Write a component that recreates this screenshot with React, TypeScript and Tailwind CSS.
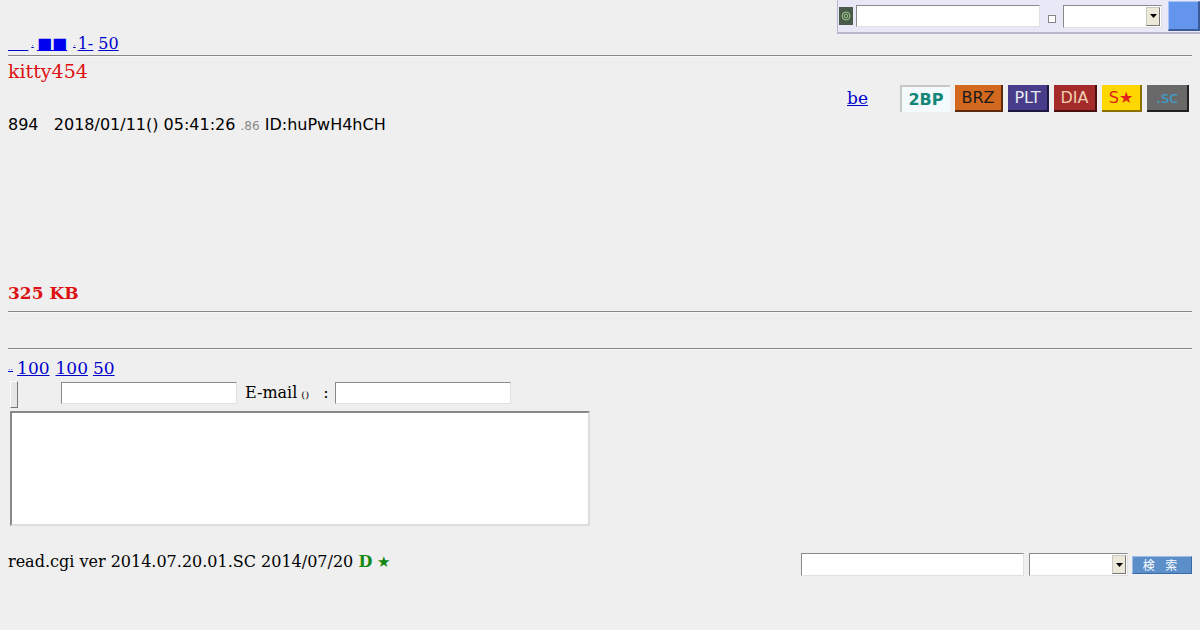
const serif = "font-['DejaVu_Serif','Liberation_Serif',serif]";
const sans = "font-['DejaVu_Sans','Noto_Sans',sans-serif]";

const boards = [
  { label: "2BP", cls: "w-[50px] bg-[#f4f9fb] text-[#13867a] font-bold border-t-2 border-l-2 border-[#c8c8c8] border-r-0 border-b-0" },
  { label: "BRZ", cls: "w-[48px] bg-[#d2691e] text-[#1a1a1a] border-r-2 border-b-2 border-[#5a2a0a]" },
  { label: "PLT", cls: "w-[41px] bg-[#483d8b] text-[#e8e8f0] border-r-2 border-b-2 border-[#1e1840]" },
  { label: "DIA", cls: "w-[43px] bg-[#a52a2a] text-[#f0d0b0] border-r-2 border-b-2 border-[#4a1010]" },
  { label: "S★", cls: "w-[40px] bg-[#ffd700] text-[#e0201a] border-r-2 border-b-2 border-[#8a7000]" },
  { label: ".sc", cls: "w-[42px] bg-[#696969] text-[#3aa0d0] border-r-2 border-b-2 border-[#222]" },
];

function Input({ w, h = "h-[22px]" }: { w: string; h?: string }) {
  return <div className={`${w} ${h} bg-white border border-t-[#8a8a8a] border-l-[#8a8a8a] border-r-[#e0e0e0] border-b-[#e0e0e0]`} />;
}

function Select({ w }: { w: string }) {
  return (
    <div className={`${w} h-[23px] bg-white border border-[#8a8a8a] border-r-[#e0e0e0] border-b-[#e0e0e0] flex justify-end items-center pr-[1px]`}>
      <div className="w-[14px] h-[19px] bg-[#ece9d8] border border-[#c8c8c8] border-r-[#777] border-b-[#777] flex items-center justify-center">
        <svg width="7" height="4" viewBox="0 0 7 4"><path d="M0 0h7L3.5 4z" fill="#000" /></svg>
      </div>
    </div>
  );
}

export default function App() {
  return (
    <div className={`min-h-[630px] w-[1200px] bg-[#efefef] relative text-black ${serif}`}>
      {/* top-right search bar */}
      <div className="absolute top-0 left-[837px] w-[363px] h-[34px] bg-[#e8e8f6] border-b-2 border-l border-[#b8b8cc] flex items-center">
        <div className="ml-[1px] w-[14px] h-[18px] bg-[#4a5a48] flex items-center justify-center">
          <svg width="10" height="10" viewBox="0 0 10 10"><circle cx="5" cy="5" r="4" fill="none" stroke="#9ccc90" strokeWidth="1" /><circle cx="5" cy="5" r="1.8" fill="none" stroke="#9ccc90" strokeWidth="1" /></svg>
        </div>
        <div className="ml-[3px]"><Input w="w-[184px]" /></div>
        <div className="ml-[8px] mt-[6px] w-[8px] h-[8px] bg-white border border-[#888]" />
        <div className="ml-[7px]"><Select w="w-[99px]" /></div>
        <div className="ml-[6px] w-[32px] h-[30px] bg-[#6495ed] border-r-2 border-b-2 border-[#3a5a9a] border-t border-l border-t-[#a8c4f4] border-l-[#a8c4f4]" />
      </div>

      <div className="px-[8px] pt-[34px]">
        <div className="text-[16px] leading-[19px] text-[#0000cc] flex items-end">
          <span className="underline">&nbsp;&nbsp;&nbsp;&nbsp;</span>
          <span className="text-[8px] ml-[3px] underline">.</span>
          <span className="underline ml-[3px] text-[#0000ee]">■■</span>
          <span className="text-[8px] ml-[6px] underline">.</span>
          <span className="underline ml-[2px]">1-</span>
          <span className="underline ml-[5px]">50</span>
        </div>
        <div className="mt-[2px] border-t border-[#888] border-b border-b-[#f8f8f8]" />
        <div className="text-[#dd1111] text-[19px] leading-[24px] mt-[2px]">kitty454</div>
        <div className="flex justify-end items-center mt-[2px] pr-[3px] h-[27px]">
          <span className="text-[#0000cc] underline text-[17px] mr-[32px] mt-[1px]">be</span>
          <div className={`flex gap-[5px] h-[27px] ${sans} text-[16px]`}>
            {boards.map((b) => (
              <div key={b.label} className={`${b.cls} h-[27px] flex items-center justify-center`}>{b.label}</div>
            ))}
          </div>
        </div>
        <div className={`${sans} text-[16px] leading-[22px] mt-[2px]`}>
          894&nbsp;&nbsp; 2018/01/11() 05:41:26 <span className="text-[12px] text-[#888]">.86</span> ID:huPwH4hCH
        </div>
        <div className="h-[145px]" />
        <div className="text-[#dd1111] font-bold text-[17px] leading-[22px]">325 KB</div>
        <div className="mt-[7px] border-t border-[#888] border-b border-b-[#f8f8f8]" />
        <div className="h-[35px]" />
        <div className="border-t border-[#888] border-b border-b-[#f8f8f8]" />
        <div className="text-[17px] leading-[20px] mt-[8px] text-[#0000cc] flex items-end">
          <span className="text-[8px] underline">..</span>
          <span className="underline ml-[4px]">100</span>
          <span className="underline ml-[6px]">100</span>
          <span className="underline ml-[5px]">50</span>
        </div>
        <div className="flex items-start mt-[3px] h-[27px]">
          <div className="ml-[2px] w-[8px] h-[27px] bg-[#e6e6e6] border border-[#fff] border-r-[#777] border-b-[#777]" />
          <div className="ml-[43px] mt-[1px]"><Input w="w-[176px]" /></div>
          <span className="ml-[8px] text-[16px] leading-[24px]">E-mail</span>
          <span className="ml-[4px] text-[10px] leading-[28px]">()</span>
          <span className="ml-[14px] text-[16px] leading-[24px]">:</span>
          <div className="ml-[6px] mt-[1px]"><Input w="w-[176px]" /></div>
        </div>
        <div className="ml-[2px] mt-[3px] w-[580px] h-[115px] bg-white border-2 border-t-[#888] border-l-[#888] border-r-[#ddd] border-b-[#ddd]" />
        <div className="flex items-start justify-between mt-[25px]">
          <div className="text-[16px] leading-[22px]">
            read.cgi ver 2014.07.20.01.SC 2014/07/20 <span className="text-[#118811] font-bold">D</span> <span className="text-[#118811] text-[15px]">★</span>
          </div>
          <div className="flex items-center mt-[2px]">
            <Input w="w-[223px]" h="h-[23px]" />
            <div className="ml-[5px]"><Select w="w-[99px]" /></div>
            <div className={`ml-[4px] w-[60px] h-[18px] bg-[#5b8fca] border border-[#3a6aa8] border-t-[#9dbde4] border-l-[#9dbde4] text-white text-[12px] leading-[16px] text-center tracking-[4px] font-['Noto_Sans_CJK_JP',sans-serif]`}>検 索</div>
          </div>
        </div>
      </div>
    </div>
  );
}
